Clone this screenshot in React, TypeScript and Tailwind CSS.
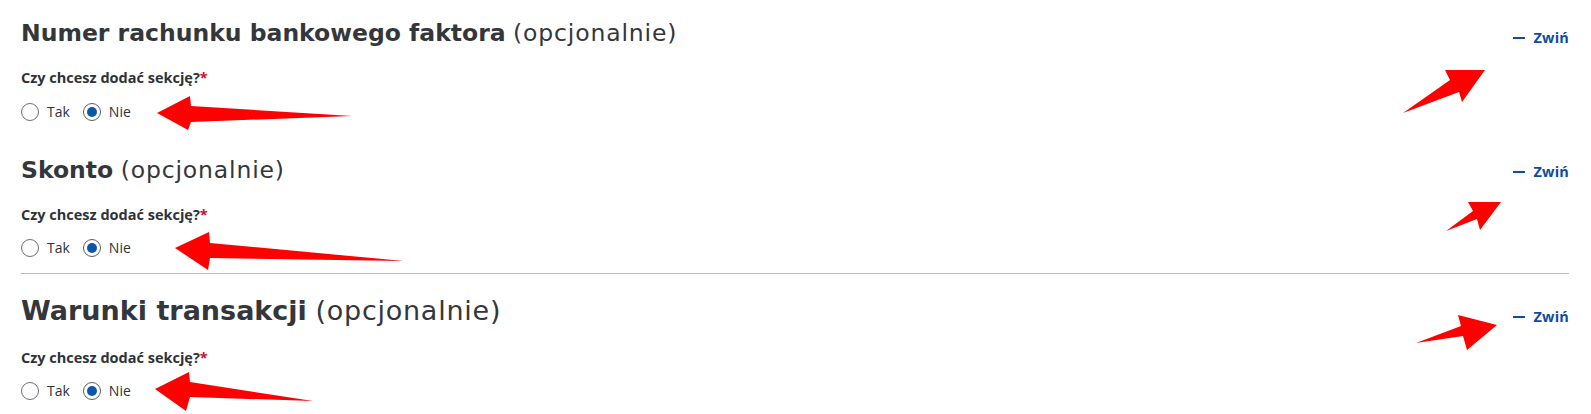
import React from 'react'

const Radio = ({ checked, label }: { checked: boolean; label: string }) => (
  <label className="flex items-center gap-[8px]">
    <span
      className={
        checked
          ? 'w-[18px] h-[18px] rounded-full border border-[#5a5f64] bg-white flex items-center justify-center'
          : 'w-[18px] h-[18px] rounded-full border border-[#6b7075] bg-white'
      }
    >
      {checked && <span className="w-[10px] h-[10px] rounded-full bg-[#0b57a8]" />}
    </span>
    <span className="text-[14px] leading-[20px] text-[#2d3338]">{label}</span>
  </label>
)

const Collapse = ({ offset }: { offset: string }) => (
  <button className={`flex items-center gap-[8px] text-[#0d4ea1] ${offset}`}>
    <span className="w-[12px] h-[2px] bg-[#0d4ea1]" />
    <span className="text-[14.5px] leading-[20px] font-bold tracking-[0.2px]">Zwiń</span>
  </button>
)

const Question = ({ labelGap, radioGap }: { labelGap: string; radioGap: string }) => (
  <div className={labelGap}>
    <p className="text-[14.5px] leading-[20px] font-bold text-[#2d3338]">
      Czy chcesz dodać sekcję?<span className="text-[#c8102e]">*</span>
    </p>
    <div className={`flex items-center gap-[13px] ${radioGap}`}>
      <Radio checked={false} label="Tak" />
      <Radio checked={true} label="Nie" />
    </div>
  </div>
)

const Arrows = () => (
  <svg className="absolute inset-0 pointer-events-none" width="1591" height="414" viewBox="0 0 1591 414">
    <g fill="#ff0000">
      <polygon points="157,113 190,96 191,106 352,116 191,122 188,130" />
      <polygon points="175,248 209,232 210,243 404,261 210,258 208,270" />
      <polygon points="155,389 189,372 190,382 313,401 190,397 186,411" />
      <polygon points="1485,70 1462,102 1459,92 1403,113 1450,80 1445,70" />
      <polygon points="1501,202 1480,230 1477,219 1446,231 1473,211 1468,202" />
      <polygon points="1497,325 1467,350 1463,336 1416,343 1461,326 1458,315" />
    </g>
  </svg>
)

export default function App() {
  return (
    <div className="relative w-[1591px] h-[414px] bg-white overflow-hidden font-['Open_Sans',sans-serif]">
      <div className="pl-[21px] pr-[22px]">
        {/* sekcja 1 */}
        <div className="pt-[17px]">
          <div className="flex justify-between items-start">
            <h2 className="font-['DejaVu_Sans',sans-serif] text-[23.5px] leading-[32px] text-[#33373b]">
              <span className="font-bold">Numer rachunku bankowego faktora</span>{' '}
              <span className="font-normal tracking-[0.85px]">(opcjonalnie)</span>
            </h2>
            <Collapse offset="mt-[11px]" />
          </div>
          <Question labelGap="mt-[19px]" radioGap="mt-[14px]" />
        </div>

        {/* sekcja 2 */}
        <div className="pt-[32px]">
          <div className="flex justify-between items-start">
            <h2 className="font-['DejaVu_Sans',sans-serif] text-[23.5px] leading-[32px] text-[#33373b]">
              <span className="font-bold">Skonto</span>{' '}
              <span className="font-normal tracking-[0.85px]">(opcjonalnie)</span>
            </h2>
            <Collapse offset="mt-[8px]" />
          </div>
          <Question labelGap="mt-[19px]" radioGap="mt-[13px]" />
        </div>

        <div className="mt-[15px] h-px bg-[#bdbdbd]" />

        {/* sekcja 3 */}
        <div className="pt-[19px]">
          <div className="flex justify-between items-start">
            <h2 className="font-['DejaVu_Sans',sans-serif] text-[27px] leading-[36px] text-[#33373b]">
              <span className="font-bold">Warunki transakcji</span>{' '}
              <span className="font-normal tracking-[0.75px]">(opcjonalnie)</span>
            </h2>
            <Collapse offset="mt-[14px]" />
          </div>
          <Question labelGap="mt-[19px]" radioGap="mt-[13px]" />
        </div>
      </div>
      <Arrows />
    </div>
  )
}
